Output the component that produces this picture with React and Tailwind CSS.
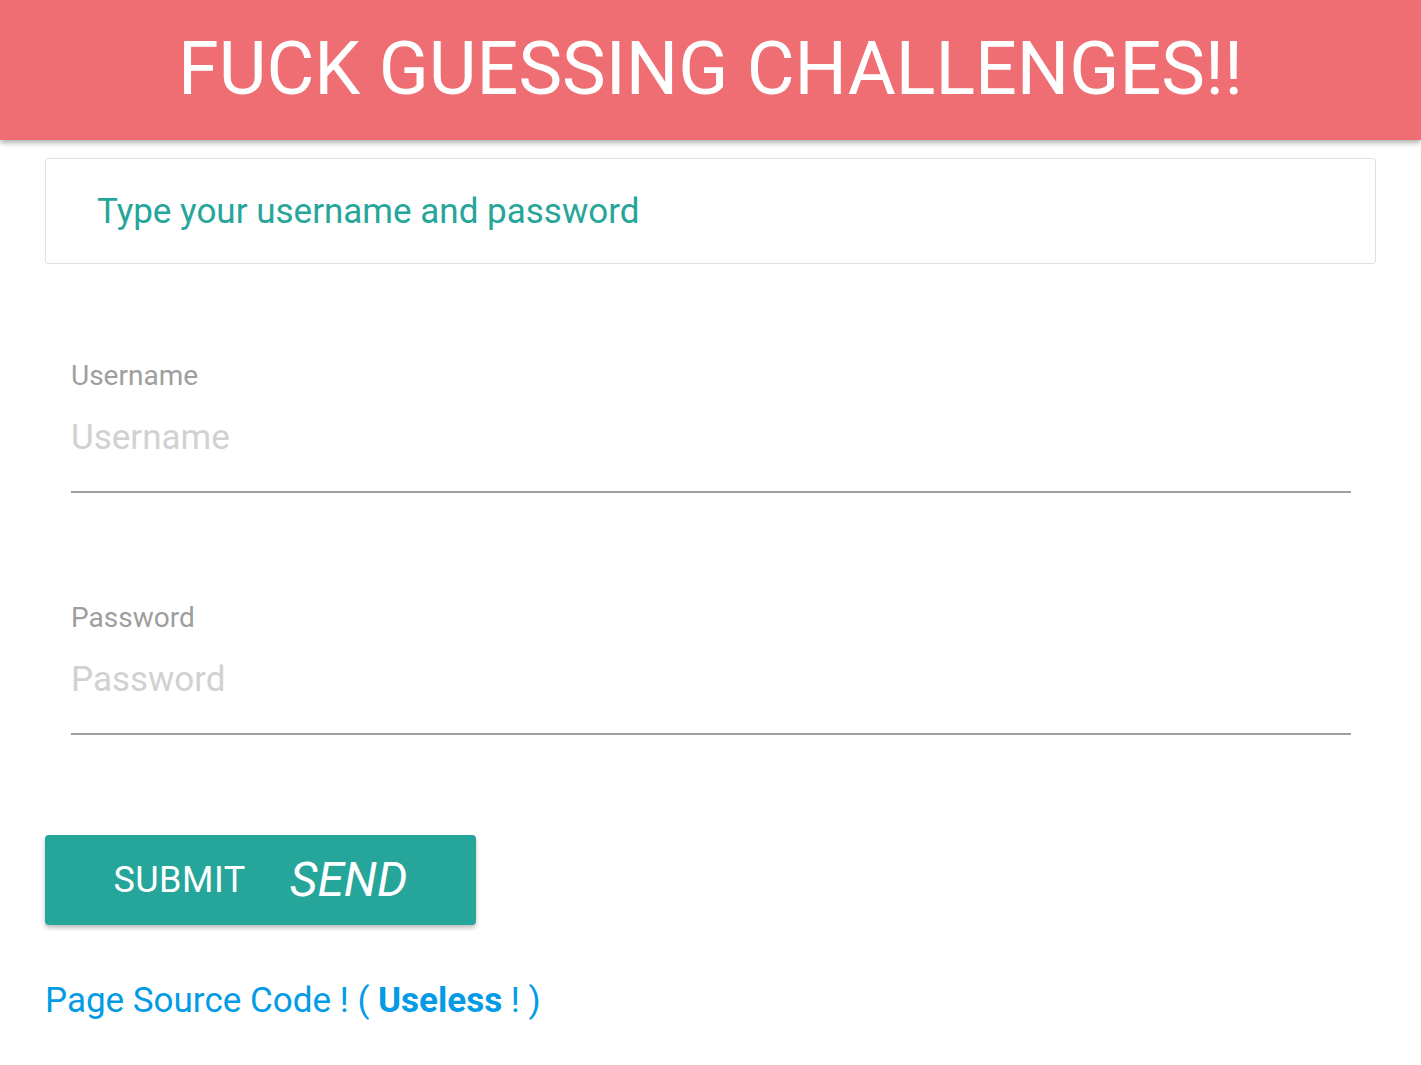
export default function App() {
  return (
    <div className="min-h-[1065px] bg-white" style={{ fontFamily: "Roboto, sans-serif" }}>
      <header className="h-[140px] bg-[#ee6e73] flex items-center justify-center shadow-[0_3px_5px_rgba(0,0,0,0.3)]">
        <h1 className="text-white text-[73.6px] font-normal leading-none">FUCK GUESSING CHALLENGES!!</h1>
      </header>
      <div className="px-[45px] pt-[18px]">
        <div className="h-[106px] border border-[#e0e0e0] rounded-[3px] flex items-center pl-[51px]">
          <p className="text-[#26a69a] text-[35px] leading-none">Type your username and password</p>
        </div>
        <div className="pl-[26px] pr-[25px] pt-[98px]">
          <div className="text-[#9e9e9e] text-[28px] leading-none">Username</div>
          <input
            placeholder="Username"
            className="block mt-[10px] w-full h-[93px] border-b-2 border-[#9e9e9e] outline-none text-[35px] placeholder:text-[#d1d1d1] pb-[17px]"
          />
          <div className="text-[#9e9e9e] text-[28px] leading-none mt-[111px]">Password</div>
          <input
            type="password"
            placeholder="Password"
            className="block mt-[10px] w-full h-[93px] border-b-2 border-[#9e9e9e] outline-none text-[35px] placeholder:text-[#d1d1d1] pb-[16px]"
          />
        </div>
        <button className="mt-[100px] w-[431px] h-[90px] bg-[#26a69a] rounded-[4px] shadow-[0_3px_4px_rgba(0,0,0,0.25)] flex items-center justify-center gap-[44px] text-white">
          <span className="text-[36px] tracking-[0.5px]">SUBMIT</span>
          <span className="text-[48px] italic">SEND</span>
        </button>
        <div className="mt-[58px] text-[#039be5] text-[35px] leading-none">
          Page Source Code ! ( <b className="font-bold">Useless</b> ! )
        </div>
      </div>
    </div>
  );
}
